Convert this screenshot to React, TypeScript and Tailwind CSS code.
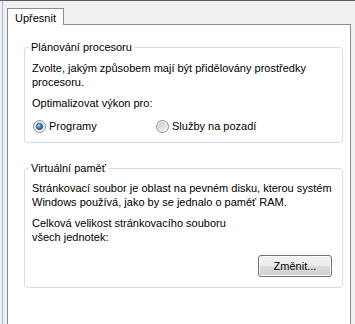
import React from "react";

function Radio({ checked }: { checked: boolean }) {
  const id = checked ? "rc" : "ru";
  return (
    <svg width="13" height="13" viewBox="0 0 13 13" className="shrink-0">
      <defs>
        <linearGradient id={id + "o"} x1="0" y1="0" x2="1" y2="1">
          <stop offset="0" stopColor="#e4e4e4" />
          <stop offset="1" stopColor="#fbfbfb" />
        </linearGradient>
        <linearGradient id={id + "i"} x1="0" y1="0" x2="1" y2="1">
          <stop offset="0" stopColor="#c9c9c9" />
          <stop offset="1" stopColor="#f4f4f4" />
        </linearGradient>
        <radialGradient id={id + "d"} cx="0.38" cy="0.35" r="0.7">
          <stop offset="0" stopColor="#aee0ff" />
          <stop offset="0.45" stopColor="#3f8ccf" />
          <stop offset="1" stopColor="#18477a" />
        </radialGradient>
      </defs>
      <circle cx="6.5" cy="6.5" r="6" fill={`url(#${id}o)`} stroke="#8e8f8f" strokeWidth="1" />
      <circle cx="6.5" cy="6.5" r="4.3" fill={`url(#${id}i)`} />
      {checked && <circle cx="6.5" cy="6.5" r="3.2" fill={`url(#${id}d)`} stroke="#1c4e82" strokeWidth="0.6" />}
    </svg>
  );
}

export default function App() {
  return (
    <div className="w-[355px] h-[324px] overflow-hidden bg-[#f0f0f0] border-t border-[#5a5a5a] font-['Liberation_Sans',Arial,sans-serif] text-[11px] leading-[14px] text-black">
      <div className="h-full pl-[2px]">
        <div className="h-full border-l border-[#a9bbd1] pl-[4px] pt-[7px] flex flex-col items-start">
          <div className="relative z-10 -mb-px w-[57px] h-[22px] border border-b-0 border-[#898c95] bg-white pl-[7px] pt-[2px]">
            Upřesnit
          </div>
          <div className="w-[344px] h-[320px] shrink-0 border border-[#898c95] bg-white pl-[16px] pr-[7px] pt-[15px]">
            <fieldset className="min-w-0 w-[319px] border border-[#d5dfe5] rounded-[3px] px-[7px] pt-[7px] pb-[9px]">
              <legend className="-ml-[3px] px-[2px] leading-[14px]">Plánování procesoru</legend>
              <p className="whitespace-nowrap">
                Zvolte, jakým způsobem mají být přidělovány prostředky
                <br />
                procesoru.
              </p>
              <p className="mt-[7px] whitespace-nowrap">Optimalizovat výkon pro:</p>
              <div className="mt-[9px] flex items-center h-[14px]">
                <div className="ml-[1px] w-[123px] flex items-center gap-[3px]">
                  <Radio checked />
                  <span>Programy</span>
                </div>
                <div className="flex items-center gap-[3px]">
                  <Radio checked={false} />
                  <span>Služby na pozadí</span>
                </div>
              </div>
            </fieldset>
            <fieldset className="min-w-0 mt-[18px] w-[319px] border border-[#d5dfe5] rounded-[3px] px-[7px] pt-[6px] pb-[10px]">
              <legend className="-ml-[3px] px-[2px] leading-[14px]">Virtuální paměť</legend>
              <p className="whitespace-nowrap">
                Stránkovací soubor je oblast na pevném disku, kterou systém
                <br />
                Windows používá, jako by se jednalo o paměť RAM.
              </p>
              <p className="mt-[7px] whitespace-nowrap">
                Celková velikost stránkovacího souboru
                <br />
                všech jednotek:
              </p>
              <div className="mt-[11px] flex justify-end pr-[3px]">
                <button className="w-[74px] h-[22px] rounded-[3px] border border-[#707070] bg-[linear-gradient(to_bottom,#f2f2f2_0%,#ebebeb_50%,#dddddd_50%,#cfcfcf_100%)] shadow-[inset_0_0_0_1px_#fcfcfc] text-[11px] leading-[14px] text-black">
                  Změnit...
                </button>
              </div>
            </fieldset>
          </div>
        </div>
      </div>
    </div>
  );
}
